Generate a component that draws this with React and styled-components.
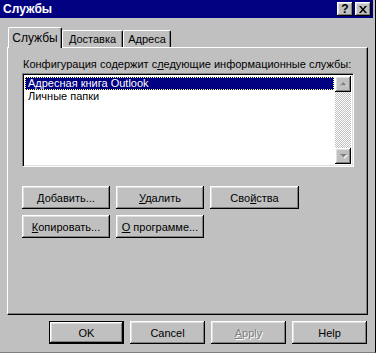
import React from "react";
import styled, { createGlobalStyle, css } from "styled-components";

const GlobalStyle = createGlobalStyle`
  html, body {
    margin: 0;
    padding: 0;
    background: #c0c0c0;
  }
  * { box-sizing: border-box; }
`;

const raised = css`
  box-shadow: inset -1px -1px #000, inset 1px 1px #fff,
    inset -2px -2px #808080, inset 2px 2px #dfdfdf;
`;

const Window = styled.div`
  width: 376px;
  height: 353px;
  background: #c0c0c0;
  font-family: "Liberation Sans", Arial, sans-serif;
  font-size: 11px;
  color: #000;
  border-right: 1px solid #000;
  border-bottom: 1px solid #808080;
  display: flex;
  flex-direction: column;
  overflow: hidden;
`;

const TitleBar = styled.div`
  height: 18px;
  margin-right: 2px;
  background: #000080;
  display: flex;
  align-items: center;
  padding: 0 2px 0 3px;
`;

const TitleText = styled.div`
  flex: 1;
  color: #fff;
  font-weight: bold;
  font-size: 12px;
`;

const TitleButtons = styled.div`
  display: flex;
  gap: 2px;
`;

const TitleButton = styled.div`
  width: 16px;
  height: 14px;
  background: #c0c0c0;
  ${raised};
  display: flex;
  align-items: center;
  justify-content: center;
  font-weight: bold;
  font-size: 12px;
  line-height: 1;
`;

const Body = styled.div`
  flex: 1;
  display: flex;
  flex-direction: column;
  padding: 9px 7px 0 7px;
`;

const TabStrip = styled.div`
  height: 20px;
  display: flex;
  align-items: flex-end;
  padding-left: 1px;
  position: relative;
  z-index: 1;
`;

const Tab = styled.div`
  width: ${(p) => p.$w}px;
  height: ${(p) => (p.$active ? 21 : 17)}px;
  margin-bottom: ${(p) => (p.$active ? -1 : 0)}px;
  background: #c0c0c0;
  border-top: 1px solid #fff;
  border-left: 1px solid #fff;
  border-right: 1px solid #000;
  border-radius: 2px 2px 0 0;
  box-shadow: inset -1px 0 #808080;
  display: flex;
  align-items: ${(p) => (p.$active ? "center" : "flex-start")};
  justify-content: center;
  padding-top: ${(p) => (p.$active ? 0 : 2)}px;
  font-size: ${(p) => (p.$active ? 12 : 11)}px;
`;

const Panel = styled.div`
  height: 268px;
  border-top: 1px solid #fff;
  border-left: 1px solid #fff;
  border-right: 1px solid #000;
  border-bottom: 1px solid #000;
  box-shadow: inset -1px -1px #808080;
  padding: 9px 13px 0 14px;
  display: flex;
  flex-direction: column;
`;

const Label = styled.div`
  height: 16px;
  line-height: 14px;
  padding-left: 1px;
  white-space: nowrap;
`;

const ListBox = styled.div`
  width: 332px;
  height: 94px;
  background: #fff;
  border-top: 1px solid #808080;
  border-left: 1px solid #808080;
  border-right: 1px solid #fff;
  border-bottom: 1px solid #fff;
  box-shadow: inset 1px 1px #000, inset -1px -1px #dfdfdf;
  padding: 2px;
  display: flex;
`;

const Items = styled.div`
  flex: 1;
  padding-top: 1px;
`;

const Item = styled.div`
  height: 13px;
  line-height: 11px;
  padding-left: 2px;
  white-space: nowrap;
  border: 1px dotted ${(p) => (p.$selected ? "#ffff80" : "transparent")};
  background: ${(p) => (p.$selected ? "#000080" : "transparent")};
  color: ${(p) => (p.$selected ? "#fff" : "#000")};
  margin-right: 1px;
`;

const ScrollBar = styled.div`
  width: 16px;
  display: flex;
  flex-direction: column;
  background: repeating-conic-gradient(#fff 0% 25%, #c0c0c0 0% 50%) 0 0 / 2px 2px;
`;

const ScrollTrack = styled.div`
  flex: 1;
`;

const ArrowButton = styled.div`
  width: 16px;
  height: 16px;
  background: #c0c0c0;
  ${raised};
  display: flex;
  align-items: center;
  justify-content: center;
`;

const ButtonGrid = styled.div`
  margin-top: 19px;
  display: flex;
  flex-direction: column;
  gap: 6px;
`;

const ButtonRow = styled.div`
  display: flex;
  gap: 6px;
`;

const Button = styled.div`
  width: ${(p) => p.$w || 88}px;
  height: 23px;
  background: #c0c0c0;
  display: flex;
  align-items: center;
  justify-content: center;
  white-space: nowrap;
  ${(p) =>
    p.$default
      ? css`
          border: 1px solid #000;
          box-shadow: inset -1px -1px #000, inset 1px 1px #fff,
            inset -2px -2px #808080, inset 2px 2px #dfdfdf;
        `
      : raised};
  color: ${(p) => (p.$disabled ? "#808080" : "#000")};
  text-shadow: ${(p) => (p.$disabled ? "1px 1px #fff" : "none")};
`;

const Caption = styled.span`
  white-space: pre;
`;

const U = styled.span`
  text-decoration: underline;
  text-underline-offset: 1px;
`;

const Footer = styled.div`
  display: flex;
  justify-content: flex-end;
  gap: 6px;
  margin-top: 6px;
  padding-right: 1px;
`;

function Arrow({ down }) {
  return (
    <svg width="7" height="4" viewBox="0 0 7 4" style={{ overflow: "visible" }}>
      <path
        d={down ? "M1 1h7l-3.5 3.5z" : "M1 4h7l-3.5-3.5z"}
        fill="#fff"
      />
      <path d={down ? "M0 0h7l-3.5 3.5z" : "M0 3.5h7l-3.5-3.5z"} fill="#808080" />
    </svg>
  );
}

function CloseGlyph() {
  return (
    <svg width="8" height="7" viewBox="0 0 8 7">
      <path d="M0 0h2l2 2.5 2-2.5h2l-3 3.5 3 3.5h-2l-2-2.5-2 2.5h-2l3-3.5z" fill="#000" />
    </svg>
  );
}

export default function App() {
  return (
    <Window>
      <GlobalStyle />
      <TitleBar>
        <TitleText>Службы</TitleText>
        <TitleButtons>
          <TitleButton>?</TitleButton>
          <TitleButton>
            <CloseGlyph />
          </TitleButton>
        </TitleButtons>
      </TitleBar>
      <Body>
        <TabStrip>
          <Tab $w={54} $active>
            Службы
          </Tab>
          <Tab $w={61}>Доставка</Tab>
          <Tab $w={48}>Адреса</Tab>
        </TabStrip>
        <Panel>
          <Label>
            Конфигурация содержит с<U>л</U>едующие информационные службы:
          </Label>
          <ListBox>
            <Items>
              <Item $selected>Адресная книга Outlook</Item>
              <Item>Личные папки</Item>
            </Items>
            <ScrollBar>
              <ArrowButton>
                <Arrow />
              </ArrowButton>
              <ScrollTrack />
              <ArrowButton>
                <Arrow down />
              </ArrowButton>
            </ScrollBar>
          </ListBox>
          <ButtonGrid>
            <ButtonRow>
              <Button>
                <Caption>
                  <U>Д</U>обавить...
                </Caption>
              </Button>
              <Button>
                <Caption>
                  <U>У</U>далить
                </Caption>
              </Button>
              <Button $w={89}>
                <Caption>
                  Сво<U>й</U>ства
                </Caption>
              </Button>
            </ButtonRow>
            <ButtonRow>
              <Button>
                <Caption>
                  <U>К</U>опировать...
                </Caption>
              </Button>
              <Button>
                <Caption>
                  <U>О</U>{" программе..."}
                </Caption>
              </Button>
            </ButtonRow>
          </ButtonGrid>
        </Panel>
        <Footer>
          <Button $w={75} $default>
            <Caption>OK</Caption>
          </Button>
          <Button $w={75}>
            <Caption>Cancel</Caption>
          </Button>
          <Button $w={75} $disabled>
            <Caption>
              <U>A</U>pply
            </Caption>
          </Button>
          <Button $w={75}>
            <Caption>Help</Caption>
          </Button>
        </Footer>
      </Body>
    </Window>
  );
}
